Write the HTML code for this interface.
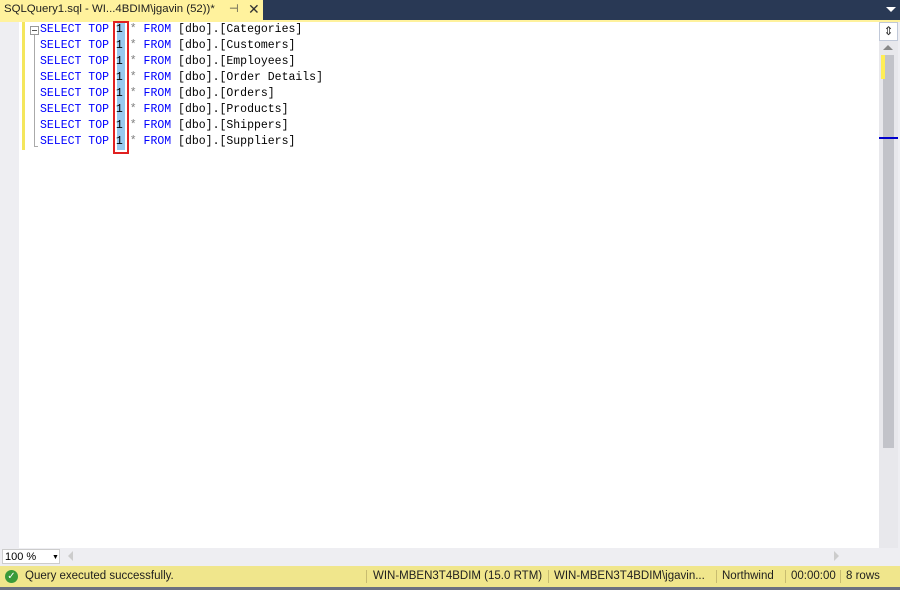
<!DOCTYPE html><html><head><style>
body{margin:0;width:900px;height:590px;background:#eeeef2;position:relative;overflow:hidden;font-family:"Liberation Sans",sans-serif}
.abs{position:absolute}
.code{font-family:"Liberation Mono",monospace;font-size:11.5px;line-height:16px;white-space:pre;color:#000}
.k{color:#0000ff}.g{color:#808080}
</style></head><body>
<div class="abs" style="left:0;top:0;width:900px;height:20px;background:#293955"></div>
<div class="abs" style="left:0;top:0;width:263px;height:21px;background:#fff29d"></div>
<div class="abs" style="left:0;top:20px;width:900px;height:2px;background:#fff29d"></div>
<div class="abs" style="left:4px;top:3px;font-size:11.4px;color:#1e1e1e">SQLQuery1.sql - WI...4BDIM\jgavin (52))*</div>
<div class="abs" style="left:229px;top:2px;font-size:11px;color:#444">⊣</div>
<div class="abs" style="left:248px;top:1px;font-size:14px;color:#333">✕</div>
<div class="abs" style="left:886px;top:7px;width:0;height:0;border-left:5px solid transparent;border-right:5px solid transparent;border-top:5px solid #fff"></div>
<div class="abs" style="left:19px;top:22px;width:860px;height:526px;background:#fff"></div>
<div class="abs" style="left:22px;top:22px;width:3px;height:128px;background:#f4e65c"></div>
<div class="abs" style="left:30px;top:26px;width:7px;height:7px;border:1px solid #999;background:#fff"></div>
<div class="abs" style="left:32px;top:30px;width:5px;height:1px;background:#555"></div>
<div class="abs" style="left:34px;top:35px;width:1px;height:112px;background:#aaa"></div>
<div class="abs" style="left:34px;top:146px;width:4px;height:1px;background:#aaa"></div>
<div class="abs" style="left:117px;top:22px;width:8px;height:128px;background:#99c9ef"></div>
<div class="abs" style="left:113px;top:21px;width:12px;height:129px;border:2px solid #e02020"></div>
<div class="abs code" style="left:40px;top:22px"><span class="k">SELECT TOP</span> 1 <span class="g">*</span> <span class="k">FROM</span> [dbo].[Categories]
<span class="k">SELECT TOP</span> 1 <span class="g">*</span> <span class="k">FROM</span> [dbo].[Customers]
<span class="k">SELECT TOP</span> 1 <span class="g">*</span> <span class="k">FROM</span> [dbo].[Employees]
<span class="k">SELECT TOP</span> 1 <span class="g">*</span> <span class="k">FROM</span> [dbo].[Order Details]
<span class="k">SELECT TOP</span> 1 <span class="g">*</span> <span class="k">FROM</span> [dbo].[Orders]
<span class="k">SELECT TOP</span> 1 <span class="g">*</span> <span class="k">FROM</span> [dbo].[Products]
<span class="k">SELECT TOP</span> 1 <span class="g">*</span> <span class="k">FROM</span> [dbo].[Shippers]
<span class="k">SELECT TOP</span> 1 <span class="g">*</span> <span class="k">FROM</span> [dbo].[Suppliers]</div>
<div class="abs" style="left:879px;top:22px;width:19px;height:526px;background:#e8e8ec"></div>
<div class="abs" style="left:879px;top:22px;width:17px;height:17px;background:#fff;border:1px solid #c0c8d8;font-size:12px;text-align:center;line-height:16px;color:#333">⇕</div>
<div class="abs" style="left:883px;top:45px;width:0;height:0;border-left:5px solid transparent;border-right:5px solid transparent;border-bottom:5px solid #888"></div>
<div class="abs" style="left:883px;top:55px;width:11px;height:393px;background:#c2c3c9"></div>
<div class="abs" style="left:881px;top:55px;width:4px;height:24px;background:#ffee55"></div>
<div class="abs" style="left:879px;top:137px;width:19px;height:2px;background:#0000cc"></div>
<div class="abs" style="left:2px;top:549px;width:58px;height:15px;background:#fff;border:1px solid #ccc;font-size:11px;line-height:15px;color:#000;padding-left:2px;box-sizing:border-box">100 %<span style="position:absolute;left:49px;top:0;font-size:7px">▼</span></div>
<div class="abs" style="left:68px;top:551px;width:0;height:0;border-top:5px solid transparent;border-bottom:5px solid transparent;border-right:5px solid #ccc"></div>
<div class="abs" style="left:834px;top:551px;width:0;height:0;border-top:5px solid transparent;border-bottom:5px solid transparent;border-left:5px solid #ccc"></div>
<div class="abs" style="left:0;top:566px;width:900px;height:21px;background:#f0e68c;font-size:11.5px;color:#1e1e1e;line-height:21px">
<div class="abs" style="left:5px;top:4px;width:13px;height:13px;border-radius:50%;background:#3a9a3a;color:#fff;font-size:10px;line-height:13px;text-align:center">✓</div>
<span class="abs" style="left:25px">Query executed successfully.</span>
<span class="abs" style="left:366px;top:4px;width:1px;height:13px;background:#c8bc70"></span>
<span class="abs" style="left:373px">WIN-MBEN3T4BDIM (15.0 RTM)</span>
<span class="abs" style="left:548px;top:4px;width:1px;height:13px;background:#c8bc70"></span>
<span class="abs" style="left:554px">WIN-MBEN3T4BDIM\jgavin...</span>
<span class="abs" style="left:716px;top:4px;width:1px;height:13px;background:#c8bc70"></span>
<span class="abs" style="left:722px">Northwind</span>
<span class="abs" style="left:785px;top:4px;width:1px;height:13px;background:#c8bc70"></span>
<span class="abs" style="left:791px">00:00:00</span>
<span class="abs" style="left:840px;top:4px;width:1px;height:13px;background:#c8bc70"></span>
<span class="abs" style="left:846px">8 rows</span>
</div>
<div class="abs" style="left:0;top:587px;width:900px;height:3px;background:#6c7180"></div>
</body></html>
